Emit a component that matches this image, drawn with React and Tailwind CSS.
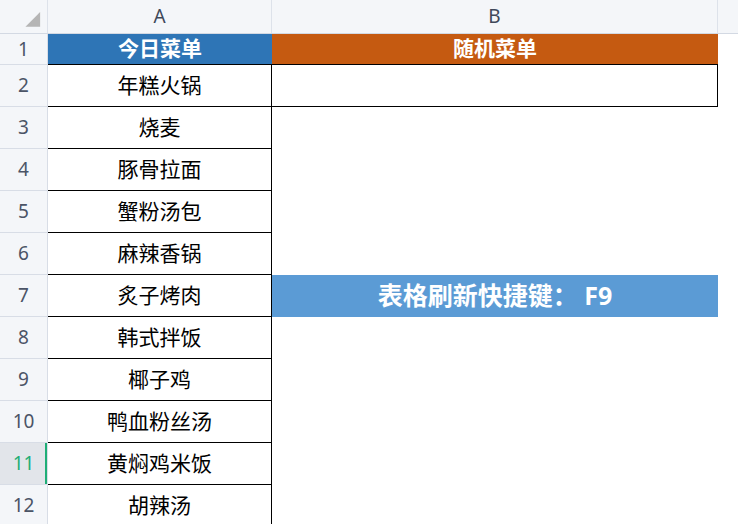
const menu = [
    "年糕火锅",
    "烧麦",
    "豚骨拉面",
    "蟹粉汤包",
    "麻辣香锅",
    "炙子烤肉",
    "韩式拌饭",
    "椰子鸡",
    "鸭血粉丝汤",
    "黄焖鸡米饭",
    "胡辣汤"
];

const font = { fontFamily: '"Noto Sans", "Noto Sans CJK SC", sans-serif' };

function RowHead({ n, selected }) {
    return (
        <div
            className={
                selected
                    ? "relative w-[48px] shrink-0 flex items-center justify-center border-r border-b border-[#d8dde6] bg-[#e2e5ea] text-[19px] text-[#1fae76]"
                    : "w-[48px] shrink-0 flex items-center justify-center border-r border-b border-[#d8dde6] bg-[#f4f6f9] text-[19px] text-[#4b5466]"
            }
        >
            {n}
            {selected && <div className="absolute right-0 top-0 h-full w-[2px] bg-[#1fae76]" />}
        </div>
    );
}

export default function App() {
    return (
        <div className="w-[738px] h-[524px] overflow-hidden bg-white" style={font}>

            {/* column headers */}
            <div className="flex h-[34px] border-b border-[#d3d9e3] bg-[#f4f6f9] text-[19px] text-[#3f4859]">
                <div className="w-[48px] shrink-0 flex items-start border-r border-[#dde2ea]">
                    <svg width="48" height="33" viewBox="0 0 48 33">
                        <polygon points="41,12 41,27 26,27" fill="#b5b5b5" />
                    </svg>
                </div>
                <div className="w-[224px] shrink-0 flex items-center justify-center border-r border-[#dde2ea]">A</div>
                <div className="w-[446px] shrink-0 flex items-center justify-center border-r border-[#dde2ea]">B</div>
                <div className="flex-1" />
            </div>

            {/* row 1 */}
            <div className="flex h-[31px]">
                <RowHead n={1} />
                <div className="w-[224px] shrink-0 flex items-center justify-center border-b border-black bg-[#2e75b6] text-[21px] font-bold text-white">
                    今日菜单
                </div>
                <div className="w-[446px] shrink-0 flex items-center justify-center border-b border-black bg-[#c55a11] text-[21px] font-bold text-white">
                    随机菜单
                </div>
            </div>

            {/* rows 2-12 */}
            {menu.map((dish, i) => {
                const n = i + 2;
                return (
                    <div key={n} className="flex h-[42px]">
                        <RowHead n={n} selected={n === 11} />
                        <div className="w-[224px] shrink-0 flex items-center justify-center border-r border-b border-black text-[21px] text-black">
                            {dish}
                        </div>
                        {n === 2 && (
                            <div className="w-[446px] shrink-0 border-r border-b border-black" />
                        )}
                        {n === 7 && (
                            <div className="w-[446px] shrink-0 flex items-center justify-center bg-[#5b9bd5] text-[25px] font-bold text-white">
                                表格刷新快捷键： F9
                            </div>
                        )}
                    </div>
                );
            })}

        </div>
    );
}
